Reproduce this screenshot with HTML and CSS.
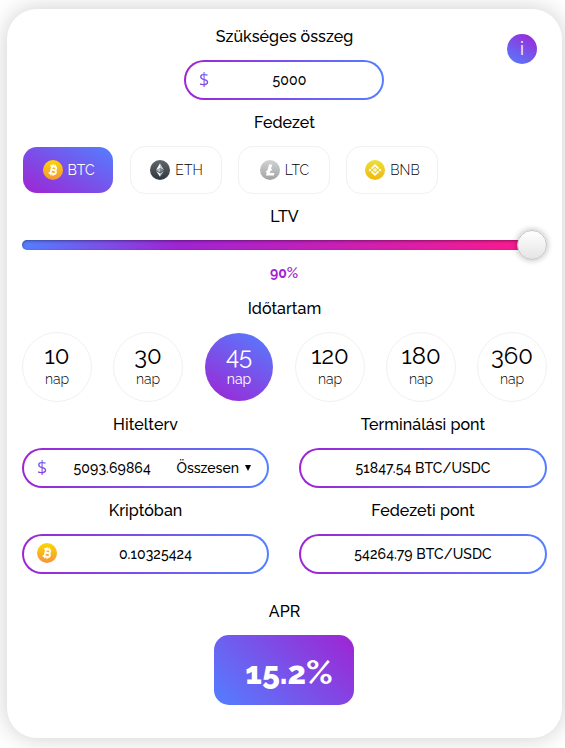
FILE: index.html
```html
<!DOCTYPE html>
<html lang="hu">
<head>
  <meta charset="UTF-8">
  <meta name="viewport" content="width=device-width, initial-scale=1.0">
  <title>Hitel kalkulátor</title>
  <link rel="stylesheet" href="styles.css">
</head>
<body>
  <!-- shared icon shapes -->
  <svg class="defs" width="0" height="0">
    <defs>
      <linearGradient id="gBtc" x1="0" y1="0" x2="0" y2="1"><stop offset="0" stop-color="#fcd800"/><stop offset="1" stop-color="#f7933a"/></linearGradient>
      <linearGradient id="gEth" x1="0" y1="0" x2="0" y2="1"><stop offset="0" stop-color="#5f686d"/><stop offset="1" stop-color="#30363d"/></linearGradient>
      <linearGradient id="gLtc" x1="0" y1="0" x2="0" y2="1"><stop offset="0" stop-color="#d2d3d5"/><stop offset="1" stop-color="#a2a2a2"/></linearGradient>
      <linearGradient id="gBnb" x1="0" y1="0" x2="0" y2="1"><stop offset="0" stop-color="#ebdf3b"/><stop offset="1" stop-color="#f0b90b"/></linearGradient>
      <symbol id="btc" viewBox="0 0 20 20">
        <circle cx="10" cy="10" r="10" fill="url(#gBtc)"/>
        <g transform="rotate(13 10 10)" fill="none" stroke="#fff">
          <path stroke-width="1.8" d="M6.4 6.4h4.7a1.7 1.7 0 0 1 0 3.5H8.4h3.1a1.9 1.9 0 0 1 0 3.8H6.4M8.3 6.2v7.6"/>
          <path stroke-width="1.2" d="M9 4.3v2M11.2 4.3v2M9 13.7v2M11.2 13.7v2"/>
        </g>
      </symbol>
      <symbol id="eth" viewBox="0 0 20 20">
        <circle cx="10" cy="10" r="10" fill="url(#gEth)"/>
        <path fill="#fff" d="M10 3.3v5L6.1 10.1z"/>
        <path fill="#c3c9cc" d="M10 3.3v5l3.9 1.8z"/>
        <path fill="#b4bbbf" d="M10 8.3v4.1l-3.9-2.3z"/>
        <path fill="#7f888e" d="M10 8.3v4.1l3.9-2.3z"/>
        <path fill="#fff" d="M6.1 11l3.9 2.4v3.4z"/>
        <path fill="#bcc3c7" d="M13.9 11L10 13.4v3.4z"/>
      </symbol>
      <symbol id="ltc" viewBox="0 0 20 20">
        <circle cx="10" cy="10" r="10" fill="url(#gLtc)"/>
        <path fill="#fff" d="M9 4.4h3.2l-1.3 4.8 1.2-.5-.5 1.7-1.2.5-.6 2h4.6l-.7 2.6H5.9l1-3.4-1.3.5.5-1.7 1.3-.5z"/>
      </symbol>
      <symbol id="bnb" viewBox="0 0 20 20">
        <circle cx="10" cy="10" r="10" fill="url(#gBnb)"/>
        <g fill="none" stroke="#fff" stroke-width="1.7">
          <path d="M6.5 8.6L10 5.1l3.5 3.5M6.5 11.4L10 14.9l3.5-3.5"/>
        </g>
        <path fill="#fff" d="M5 8.5L6.5 10 5 11.5 3.5 10zM15 8.5l1.5 1.5-1.5 1.5-1.5-1.5zM10 7.9l2.1 2.1-2.1 2.1L7.9 10z"/>
        <path fill="#efce25" d="M10 9.2l.8.8-.8.8-.8-.8z"/>
      </symbol>
    </defs>
  </svg>

  <div class="calculator">
    <div class="info">i</div>

    <div class="title">Szükséges összeg</div>
    <div class="field amount">
      <span class="dollar">$</span>
      <input class="value" type="text" value="5000">
    </div>

    <div class="title">Fedezet</div>
    <div class="coins">
      <div class="coin active"><svg class="icon"><use href="#btc"/></svg><span>BTC</span></div>
      <div class="coin"><svg class="icon"><use href="#eth"/></svg><span>ETH</span></div>
      <div class="coin"><svg class="icon"><use href="#ltc"/></svg><span>LTC</span></div>
      <div class="coin"><svg class="icon"><use href="#bnb"/></svg><span>BNB</span></div>
    </div>

    <div class="title">LTV</div>
    <div class="slider"><div class="thumb"></div></div>
    <div class="percent">90<span>%</span></div>

    <div class="title">Időtartam</div>
    <div class="terms">
      <div class="term"><b>10</b><span>nap</span></div>
      <div class="term"><b>30</b><span>nap</span></div>
      <div class="term active"><b>45</b><span>nap</span></div>
      <div class="term"><b>120</b><span>nap</span></div>
      <div class="term"><b>180</b><span>nap</span></div>
      <div class="term"><b>360</b><span>nap</span></div>
    </div>

    <div class="results">
      <div class="result">
        <div class="title">Hitelterv</div>
        <div class="field">
          <span class="dollar">$</span>
          <div class="value">5093.69864</div>
          <div class="select"><span>Összesen</span><i class="arrow"></i></div>
        </div>
      </div>
      <div class="result">
        <div class="title">Terminálási pont</div>
        <div class="field"><div class="value">51847.54 BTC/USDC</div></div>
      </div>
      <div class="result">
        <div class="title">Kriptóban</div>
        <div class="field">
          <svg class="icon"><use href="#btc"/></svg>
          <div class="value">0.10325424</div>
        </div>
      </div>
      <div class="result">
        <div class="title">Fedezeti pont</div>
        <div class="field"><div class="value">54264.79 BTC/USDC</div></div>
      </div>
    </div>

    <div class="title apr-title">APR</div>
    <div class="apr">15.2<span>%</span></div>
  </div>
</body>
</html>
```

FILE: styles.css
```css
* {
  box-sizing: border-box;
}

body {
  margin: 0;
  height: 748px;
  padding: 9px 3px 10px 7px;
  overflow: hidden;
  background: #fff;
  color: #000;
  font-family: Raleway, Lato, "Open Sans", sans-serif;
  font-variant-numeric: oldstyle-nums;
}

.defs {
  position: absolute;
}

.calculator {
  position: relative;
  width: 555px;
  height: 729px;
  padding: 15px 15px 0;
  border-radius: 30px;
  background: #fff;
  box-shadow: 0 0 25px rgba(0, 0, 0, 0.2);
}

.info {
  position: absolute;
  top: 25px;
  right: 25px;
  width: 30px;
  height: 30px;
  border-radius: 50%;
  background: linear-gradient(30deg, #537fff, #9f24d3);
  color: #fff;
  font-size: 18px;
  line-height: 29px;
  text-align: center;
}

.title {
  height: 24px;
  margin-bottom: 12px;
  font-size: 16px;
  font-weight: 500;
  letter-spacing: 0.05px;
  line-height: 26px;
  text-align: center;
  white-space: nowrap;
}

/* pill with gradient border */
.field {
  display: flex;
  align-items: center;
  height: 40px;
  margin-bottom: 10px;
  padding: 0 13px;
  border: 2px solid transparent;
  border-radius: 20px;
  background: linear-gradient(#fff, #fff) padding-box, linear-gradient(90deg, #9f24d3, #537fff) border-box;
}

.amount {
  width: 200px;
  margin-left: 162px;
}

.value {
  flex: 1;
  min-width: 0;
  padding: 0;
  border: 0;
  outline: 0;
  background: none;
  color: #000;
  font-family: inherit;
  font-size: 14px;
  font-weight: 500;
  font-variant-numeric: inherit;
  letter-spacing: 0.1px;
  line-height: 20px;
  text-align: center;
  white-space: nowrap;
}

.dollar {
  width: 11px;
  background: linear-gradient(45deg, #9f24d3, #537fff);
  -webkit-background-clip: text;
  background-clip: text;
  color: transparent;
  font-family: "Open Sans", sans-serif;
  font-size: 18px;
  line-height: 24px;
  margin-top: -2px;
}

.icon {
  flex: none;
  display: block;
  width: 20px;
  height: 20px;
}

.field .icon {
  margin-top: -2px;
}

.coins {
  display: flex;
  gap: 16px;
  margin-bottom: 10px;
}

.coin {
  display: flex;
  align-items: center;
  justify-content: center;
  gap: 5px;
  width: 92px;
  height: 48px;
  padding-left: 1px;
  border: 1px solid #f1f1f1;
  border-radius: 15px;
  font-size: 14px;
  font-weight: 300;
}

.coin.active {
  border-color: transparent;
  background: linear-gradient(30deg, #9f24d3, #537fff) padding-box;
  color: #fff;
}

.coin.active span {
  font-weight: 400;
}

.slider {
  display: flex;
  align-items: center;
  justify-content: flex-end;
  height: 10px;
  margin-right: 3px;
  border-radius: 5px;
  background: linear-gradient(90deg, #537fff, #9f24d3 30%, #ff1a8c);
  box-shadow: inset 0 1px 3px rgba(0, 0, 0, 0.4);
}

.thumb {
  width: 30px;
  height: 30px;
  margin-right: -3px;
  border: 1px solid #c4c4c4;
  border-radius: 50%;
  background: linear-gradient(#fff, #e4e4e4);
  box-shadow: 0 0 6px rgba(0, 0, 0, 0.3);
}

.percent {
  height: 20px;
  margin: 13px 0;
  padding-right: 1px;
  color: #9f24d3;
  font-size: 14px;
  font-weight: 700;
  line-height: 20px;
  text-align: center;
}

.percent span {
  font-size: 15px;
  font-weight: 600;
}

.terms {
  display: flex;
  justify-content: space-between;
  margin-bottom: 10px;
}

.term {
  width: 70px;
  height: 70px;
  padding-top: 9px;
  border: 1px solid #f1f1f1;
  border-radius: 50%;
  text-align: center;
}

.term b {
  display: block;
  height: 29px;
  font-size: 24px;
  font-weight: 400;
  line-height: 28px;
}

.term span {
  display: block;
  font-size: 14px;
  font-weight: 300;
  line-height: 16px;
}

.term.active {
  border-color: transparent;
  background: linear-gradient(30deg, #9f24d3, #537fff) padding-box;
  color: #fff;
}

.term.active span {
  font-weight: 400;
}

.results {
  display: grid;
  grid-template-columns: 247px 248px;
  column-gap: 30px;
}

.select {
  display: flex;
  align-items: center;
  gap: 6px;
  padding-right: 3px;
  font-size: 14px;
  font-weight: 500;
}

.arrow {
  width: 6px;
  height: 6px;
  background: #000;
  clip-path: polygon(0 0, 100% 0, 50% 100%);
}

.apr-title {
  margin-top: 15px;
}

.apr {
  width: 140px;
  height: 70px;
  margin-left: 192px;
  padding-left: 10px;
  border-radius: 15px;
  background: linear-gradient(45deg, #537fff, #9f24d3);
  color: #fff;
  font-size: 32px;
  font-weight: 800;
  line-height: 76px;
  text-align: center;
}

.apr span {
  font-size: 34px;
  font-weight: 700;
  line-height: 1;
}
```
